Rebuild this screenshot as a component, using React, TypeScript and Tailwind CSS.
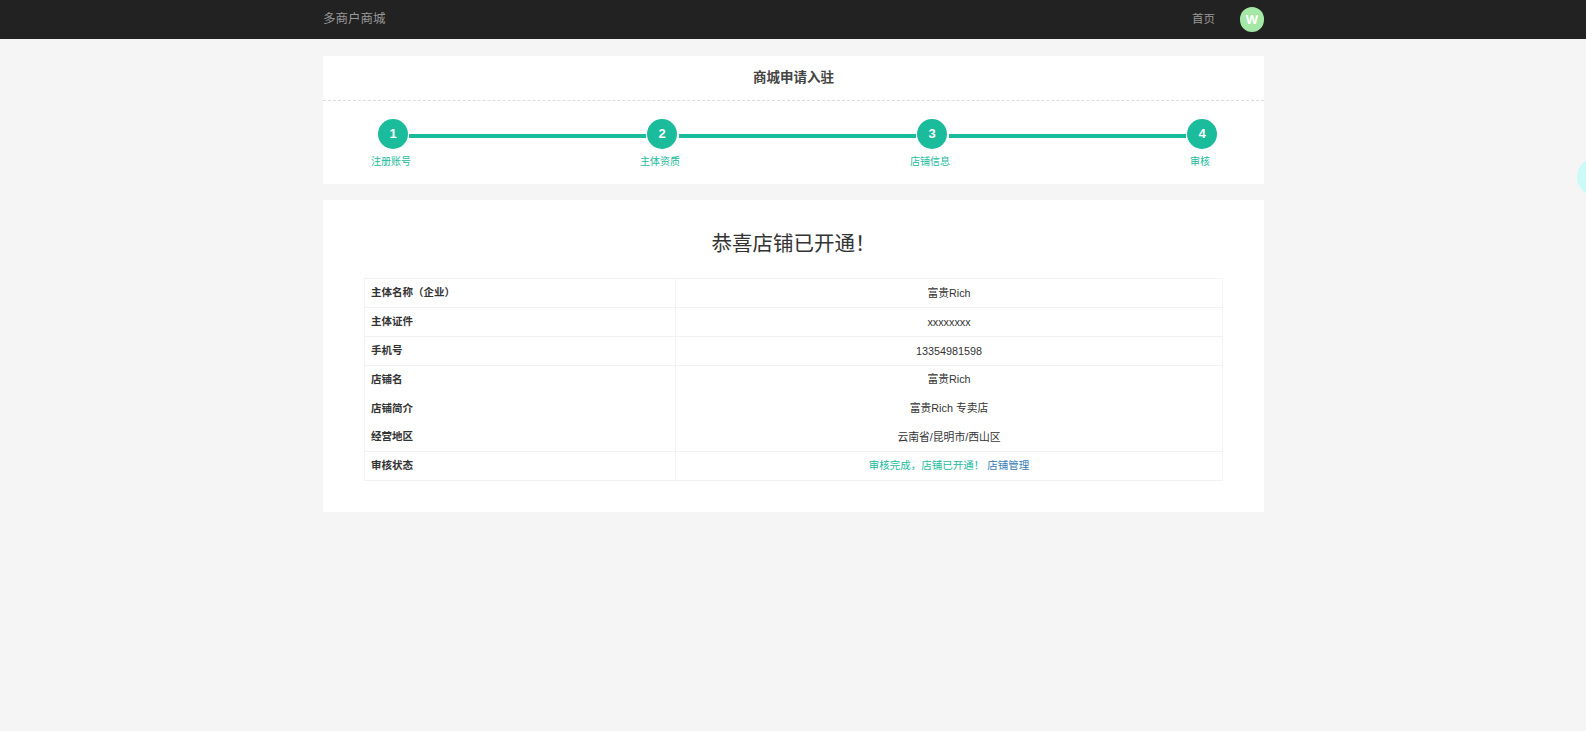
import React from 'react';

const steps = ['注册账号', '主体资质', '店铺信息', '审核'];

const rows = [
  { label: '主体名称（企业）', value: '富贵Rich', line: 'border-b' },
  { label: '主体证件', value: 'xxxxxxxx', line: 'border-b' },
  { label: '手机号', value: '13354981598', line: 'border-b' },
  { label: '店铺名', value: '富贵Rich', line: '-mt-px' },
  { label: '店铺简介', value: '富贵Rich 专卖店', line: '' },
  { label: '经营地区', value: '云南省/昆明市/西山区', line: 'border-b' },
];

export default function App() {
  return (
    <div className="relative min-h-[731px] overflow-hidden bg-[#f5f5f5] font-['Liberation_Sans','Noto_Sans_CJK_SC',sans-serif] text-[10.5px] text-[#333]">

      {/* HEADER */}
      <header className="h-[39px] bg-[#222]">
        <div className="ml-[323px] flex h-full w-[941px] items-center justify-between">
          <span className="text-[12.5px] text-[#999]">多商户商城</span>
          <div className="flex items-center gap-[25px]">
            <span className="text-[11.5px] text-[#999]">首页</span>
            <div className="flex h-[25px] w-6 items-center justify-center rounded-full bg-[#a3e8a5] text-[13px] font-bold text-white">
              W
            </div>
          </div>
        </div>
      </header>

      <main className="ml-[323px] w-[941px]">

        {/* STEPS */}
        <section className="mt-[17px] h-[128px] bg-white">
          <h2 className="flex h-[45px] items-center justify-center border-b border-dashed border-[#ddd] text-[13.5px] font-bold text-[#444]">
            商城申请入驻
          </h2>
          <div className="flex pl-[55px] pr-[47px] pt-[18px]">
            {steps.map((step, i) => (
              <React.Fragment key={step}>
                <div className="flex w-[30px] shrink-0 flex-col items-center">
                  <div className="flex h-[30px] w-[30px] items-center justify-center rounded-full bg-[#1abc9c] text-[13px] font-bold text-white">
                    {i + 1}
                  </div>
                  <span className="mt-[5px] -translate-x-[2px] whitespace-nowrap text-[10px] leading-4 text-[#1abc9c]">{step}</span>
                </div>
                {i < 3 && <div className={`mr-px mt-[15px] h-1 flex-1 bg-[#1abc9c] ${i === 0 ? 'ml-px' : 'ml-[2px]'}`} />}
              </React.Fragment>
            ))}
          </div>
        </section>

        {/* RESULT */}
        <section className="mt-4 h-[312px] bg-white pl-[41px] pr-[41px] pt-[29px]">
          <h1 className="mb-5 text-center text-[20.5px] leading-[29px] text-[#333]">恭喜店铺已开通！</h1>
          <div className="border-x border-t border-[#f2f2f2]">
            {rows.map((row) => (
              <div key={row.label} className={`flex h-[29px] items-center border-[#f2f2f2] ${row.line}`}>
                <div className="flex h-full w-[310px] shrink-0 items-center pl-[6px] font-bold">
                  {row.label}
                </div>
                <div className="flex h-full flex-1 items-center justify-center border-l border-[#f2f2f2] text-[10.8px]">
                  {row.value}
                </div>
              </div>
            ))}
            <div className="flex h-[29px] items-center border-b border-[#f2f2f2]">
              <div className="flex h-full w-[310px] shrink-0 items-center pl-[6px] font-bold">审核状态</div>
              <div className="flex h-full flex-1 items-center justify-center border-l border-[#f2f2f2]">
                <span className="text-[#1abc9c]">审核完成，店铺已开通！</span>
                <span className="ml-[3px] text-[#337ab7]">店铺管理</span>
              </div>
            </div>
          </div>
        </section>

      </main>

      {/* FLOATING BUBBLE */}
      <div className="absolute left-[1577px] top-[158px] h-[38px] w-[38px] rounded-full bg-[#ccfbf7]" />
    </div>
  );
}
